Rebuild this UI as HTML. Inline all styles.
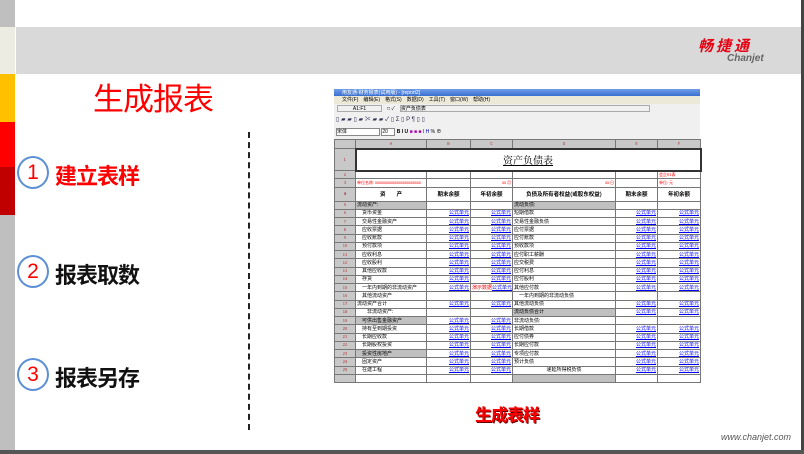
<!DOCTYPE html>
<html><head><meta charset="utf-8"><style>
*{margin:0;padding:0;box-sizing:border-box}
body{width:804px;height:454px;position:relative;background:#fff;overflow:hidden;font-family:"Liberation Sans","Noto Sans CJK SC",sans-serif}
.a{position:absolute}
.circ{position:absolute;left:17px;width:32px;height:33px;border:2px solid #5b8fd6;border-radius:50%;color:#f00;font-size:21px;line-height:29px;text-align:center}
.lab{position:absolute;left:55px;font-size:22px;font-weight:bold;letter-spacing:-1px}
table{border-collapse:collapse;table-layout:fixed;font-size:5px;font-family:"Noto Sans CJK SC",sans-serif;line-height:1}
td{border:1px solid #777;overflow:hidden;white-space:nowrap;padding:0 1px;height:8.25px;line-height:6px}
td.n{background:#c8c8c8;color:#a33;text-align:center;font-size:4px}
td.l{color:#00f;text-decoration:underline;text-align:right}
td.g{background:#c0c0c0}
.tb{position:absolute;left:334px;width:366px}
</style></head><body>
<div class="a" style="left:0;top:0;width:15px;height:27px;background:#bfbfbf"></div>
<div class="a" style="left:0;top:27px;width:15px;height:47px;background:#ececE2"></div>
<div class="a" style="left:0;top:74px;width:15px;height:48px;background:#ffc000"></div>
<div class="a" style="left:0;top:122px;width:15px;height:45px;background:#f00"></div>
<div class="a" style="left:0;top:167px;width:15px;height:48px;background:#c00000"></div>
<div class="a" style="left:0;top:215px;width:15px;height:236px;background:#bfbfbf"></div>
<div class="a" style="left:16px;top:27px;width:785px;height:47px;background:#d9d9d9"></div>
<div class="a" style="left:801px;top:0;width:3px;height:454px;background:#444"></div>
<div class="a" style="left:0;top:450px;width:804px;height:4px;background:#555"></div>
<div class="a" style="left:698px;top:35px;color:#e60012;font-size:15px;font-weight:bold;font-style:italic;letter-spacing:3px">畅捷通</div>
<div class="a" style="left:727px;top:53px;color:#666;font-size:10px;font-weight:bold;font-style:italic">Chanjet</div>
<div class="a" style="left:93px;top:74px;color:#f00;font-size:31px;letter-spacing:-1px">生成报表</div>
<div class="circ" style="top:156px">1</div><div class="lab" style="top:159px;color:#f00">建立表样</div>
<div class="circ" style="top:255px">2</div><div class="lab" style="top:258px;color:#111">报表取数</div>
<div class="circ" style="top:358px">3</div><div class="lab" style="top:361px;color:#111">报表另存</div>
<div class="a" style="left:248px;top:132px;height:298px;border-left:2px dashed #222"></div>
<div class="a" style="left:475px;top:401px;color:#f00;font-size:17px;font-weight:bold;letter-spacing:-1px;text-shadow:1px 1px 0 #600">生成表样</div>
<div class="a" style="left:721px;top:432px;color:#555;font-size:9px;font-style:italic">www.chanjet.com</div>
<!-- app -->
<div class="tb" style="top:89px;height:7px;background:linear-gradient(#6f9ee8,#3a6fd0);font-size:5px;color:#fff;padding-left:8px">用友通-财务报表(试用版) - [report2]</div>
<div class="tb" style="top:96px;height:8px;background:#ece9d8;font-size:5px;padding-left:8px;line-height:8px">文件(F)　编辑(E)　格式(S)　数据(D)　工具(T)　窗口(W)　帮助(H)</div>
<div class="tb" style="top:104px;height:10px;background:#f0f0f0;font-size:5px;line-height:10px"><span style="display:inline-block;width:45px;margin-left:3px;border:1px solid #aaa;height:7px;line-height:6px;text-align:center">A1:F1</span>　□ ✓　<span style="display:inline-block;width:250px;border:1px solid #aaa;height:7px;line-height:6px">资产负债表</span></div>
<div class="tb" style="top:114px;height:12px;background:#f0f0f0;font-size:6px;line-height:12px;padding-left:2px;color:#335">▯ ▰ ▰ ▯ ▰ ✂ ▰ ▰ ✓ ▯ Σ ▯ P ¶ ▯ ▯</div>
<div class="tb" style="top:126px;height:13px;background:#f0f0f0;font-size:5px;line-height:13px;padding-left:2px"><span style="display:inline-block;width:44px;border:1px solid #888;height:8px;line-height:7px;background:#fff">宋体</span> <span style="display:inline-block;width:14px;border:1px solid #888;height:8px;line-height:7px;background:#fff">20</span> <b>B I U</b> <span style="color:#a0a">■ ■ ■</span> <span style="color:#00a">I H</span> % ⊕</div>
<table class="tb" style="top:139px">
<colgroup><col style="width:21px"><col style="width:71px"><col style="width:44px"><col style="width:42px"><col style="width:103px"><col style="width:42px"><col style="width:43px"></colgroup>
<tr><td class="n" style="height:9px"></td><td class="n">A</td><td class="n">B</td><td class="n">C</td><td class="n">D</td><td class="n">E</td><td class="n">F</td></tr>
<tr><td class="n" style="height:22px">1</td><td colspan="6" style="border:2px solid #333;text-align:center;font-size:10px;line-height:12px;font-family:'Noto Serif CJK SC',serif;text-decoration:underline">资产负债表</td></tr>
<tr><td class="n">2</td><td></td><td></td><td></td><td></td><td></td><td style="color:#f00;font-size:4px">会企01表</td></tr>
<tr style="color:#f00;font-size:4px"><td class="n">3</td><td>单位名称: xxxxxxxxxxxxxxxxxxxxxxx</td><td></td><td style="text-align:right">xx 月</td><td style="text-align:right">xx 日</td><td></td><td>单位: 元</td></tr>
<tr style="font-weight:bold;font-size:5.5px;text-align:center"><td class="n" style="height:14px">4</td><td>资　　产</td><td>期末余额</td><td>年初余额</td><td>负债及所有者权益(或股东权益)</td><td>期末余额</td><td>年初余额</td></tr>
<tr><td class="n">5</td><td class="g">流动资产:</td><td></td><td></td><td class="g">流动负债:</td><td></td><td></td></tr>
<tr><td class="n">6</td><td>　货币资金</td><td class="l">公式单元</td><td class="l">公式单元</td><td>短期借款</td><td class="l">公式单元</td><td class="l">公式单元</td></tr>
<tr><td class="n">7</td><td>　交易性金融资产</td><td class="l">公式单元</td><td class="l">公式单元</td><td>交易性金融负债</td><td class="l">公式单元</td><td class="l">公式单元</td></tr>
<tr><td class="n">8</td><td>　应收票据</td><td class="l">公式单元</td><td class="l">公式单元</td><td>应付票据</td><td class="l">公式单元</td><td class="l">公式单元</td></tr>
<tr><td class="n">9</td><td>　应收账款</td><td class="l">公式单元</td><td class="l">公式单元</td><td>应付账款</td><td class="l">公式单元</td><td class="l">公式单元</td></tr>
<tr><td class="n">10</td><td>　预付款项</td><td class="l">公式单元</td><td class="l">公式单元</td><td>预收款项</td><td class="l">公式单元</td><td class="l">公式单元</td></tr>
<tr><td class="n">11</td><td>　应收利息</td><td class="l">公式单元</td><td class="l">公式单元</td><td>应付职工薪酬</td><td class="l">公式单元</td><td class="l">公式单元</td></tr>
<tr><td class="n">12</td><td>　应收股利</td><td class="l">公式单元</td><td class="l">公式单元</td><td>应交税费</td><td class="l">公式单元</td><td class="l">公式单元</td></tr>
<tr><td class="n">13</td><td>　其他应收款</td><td class="l">公式单元</td><td class="l">公式单元</td><td>应付利息</td><td class="l">公式单元</td><td class="l">公式单元</td></tr>
<tr><td class="n">14</td><td>　存货</td><td class="l">公式单元</td><td class="l">公式单元</td><td>应付股利</td><td class="l">公式单元</td><td class="l">公式单元</td></tr>
<tr><td class="n">15</td><td>　一年内到期的非流动资产</td><td class="l">公式单元</td><td class="l"><span style="color:#f00;text-decoration:none;float:left">演示数据</span>公式单元</td><td>其他应付款</td><td class="l">公式单元</td><td class="l">公式单元</td></tr>
<tr><td class="n">16</td><td>　其他流动资产</td><td></td><td></td><td>　一年内到期的非流动负债</td><td></td><td></td></tr>
<tr><td class="n">17</td><td>流动资产合计</td><td class="l">公式单元</td><td class="l">公式单元</td><td>其他流动负债</td><td class="l">公式单元</td><td class="l">公式单元</td></tr>
<tr><td class="n">18</td><td>　　非流动资产:</td><td></td><td></td><td class="g">流动负债合计</td><td class="l">公式单元</td><td class="l">公式单元</td></tr>
<tr><td class="n">19</td><td class="g">　可供出售金融资产</td><td class="l">公式单元</td><td class="l">公式单元</td><td>非流动负债:</td><td></td><td></td></tr>
<tr><td class="n">20</td><td>　持有至到期投资</td><td class="l">公式单元</td><td class="l">公式单元</td><td>长期借款</td><td class="l">公式单元</td><td class="l">公式单元</td></tr>
<tr><td class="n">21</td><td>　长期应收款</td><td class="l">公式单元</td><td class="l">公式单元</td><td>应付债券</td><td class="l">公式单元</td><td class="l">公式单元</td></tr>
<tr><td class="n">22</td><td>　长期股权投资</td><td class="l">公式单元</td><td class="l">公式单元</td><td>长期应付款</td><td class="l">公式单元</td><td class="l">公式单元</td></tr>
<tr><td class="n">23</td><td class="g">　投资性房地产</td><td class="l">公式单元</td><td class="l">公式单元</td><td>专项应付款</td><td class="l">公式单元</td><td class="l">公式单元</td></tr>
<tr><td class="n">24</td><td>　固定资产</td><td class="l">公式单元</td><td class="l">公式单元</td><td>预计负债</td><td class="l">公式单元</td><td class="l">公式单元</td></tr>
<tr><td class="n">25</td><td>　在建工程</td><td class="l">公式单元</td><td class="l">公式单元</td><td style="text-align:center">递延所得税负债</td><td class="l">公式单元</td><td class="l">公式单元</td></tr>
<tr><td class="n" style="height:5px;line-height:2px"></td><td style="height:5px"></td><td></td><td></td><td class="g"></td><td></td><td></td></tr>
</table>
</body></html>
